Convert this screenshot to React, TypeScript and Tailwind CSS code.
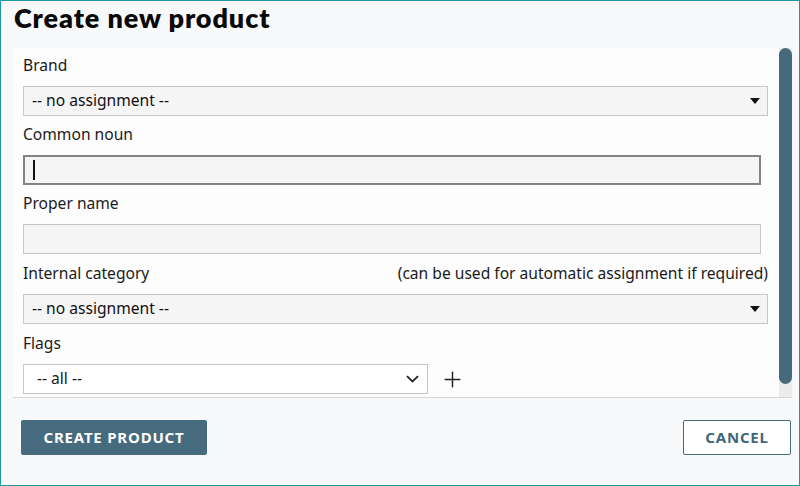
import { Plus } from 'lucide-react';

const bodyFont = { fontFamily: '"Noto Sans", "Open Sans", sans-serif' };

function Caret() {
    return (
        <svg width="10" height="6" viewBox="0 0 10 6" className="shrink-0">
            <path d="M0 0H10L5 6Z" fill="#111" />
        </svg>
    );
}

function Chevron() {
    return (
        <svg width="13" height="8" viewBox="0 0 13 8" className="shrink-0">
            <path d="M1 1.2L6.5 6.5L12 1.2" fill="none" stroke="#222" strokeWidth="1.8" />
        </svg>
    );
}

function FakeSelect({ value }: { value: string }) {
    return (
        <div className="flex h-[30px] w-[745px] items-center justify-between border border-[#c6c6c6] bg-[#f5f5f5] pl-[8px] pr-[7px] text-[15.6px] text-[#111]">
            <span>{value}</span>
            <Caret />
        </div>
    );
}

export default function App() {
    return (
        <div
            className="flex h-[486px] w-[800px] flex-col border border-[#1b9aa5] bg-[#f8f9fb] text-[#1a1a1a]"
            style={bodyFont}
        >
            <div className="flex h-[47px] items-start pl-[13px] pt-[1px]">
                <h1
                    className="text-[27px] font-extrabold leading-[32px] tracking-[0.9px] text-[#0a0a0a]"
                    style={{ fontFamily: 'Lato, "Noto Sans", sans-serif' }}
                >
                    Create new product
                </h1>
            </div>

            <div className="ml-[12px] mr-[7px] flex h-[350px] border-b border-[#d2d7dc] bg-[#fdfdfd]">
                <div className="flex-1 overflow-hidden pl-[10px] pt-[6px] text-[15.6px]">
                    <div className="mb-[10px] h-[22px] leading-[22px]">Brand</div>
                    <FakeSelect value="-- no assignment --" />

                    <div className="mb-[10px] mt-[7px] h-[22px] leading-[22px]">Common noun</div>
                    <div className="flex h-[30px] w-[738px] items-center border-2 border-[#838383] bg-[#f5f5f5] pl-[8px]">
                        <span className="h-[20px] w-[2px] bg-[#111]" />
                    </div>

                    <div className="mb-[10px] mt-[7px] h-[22px] leading-[22px]">Proper name</div>
                    <div className="h-[30px] w-[738px] border border-[#c6c6c6] bg-[#f5f5f5]" />

                    <div className="mb-[10px] mt-[8px] flex h-[22px] w-[745px] justify-between leading-[22px]">
                        <span>Internal category</span>
                        <span>(can be used for automatic assignment if required)</span>
                    </div>
                    <FakeSelect value="-- no assignment --" />

                    <div className="mb-[10px] mt-[8px] h-[22px] leading-[22px]">Flags</div>
                    <div className="flex items-center gap-[12px]">
                        <div className="flex h-[30px] w-[405px] items-center justify-between border border-[#c6c6c6] bg-white pl-[13px] pr-[8px]">
                            <span>-- all --</span>
                            <Chevron />
                        </div>
                        <Plus size={25} strokeWidth={1.4} color="#222" />
                    </div>
                </div>
                <div className="flex w-[13px] flex-col bg-[#ececec]">
                    <div className="h-[336px] rounded-full bg-[#46697c]" />
                </div>
            </div>

            <div className="flex items-start justify-between pl-[20px] pr-[8px] pt-[22px]">
                <button className="h-[35px] w-[186px] rounded-[2px] bg-[#466a7e] text-[15px] font-bold tracking-[0.8px] text-white">
                    CREATE PRODUCT
                </button>
                <button className="h-[35px] w-[108px] rounded-[2px] border border-[#466a7e] bg-white text-[15px] font-bold tracking-[0.8px] text-[#3f6779]">
                    CANCEL
                </button>
            </div>
        </div>
    );
}
